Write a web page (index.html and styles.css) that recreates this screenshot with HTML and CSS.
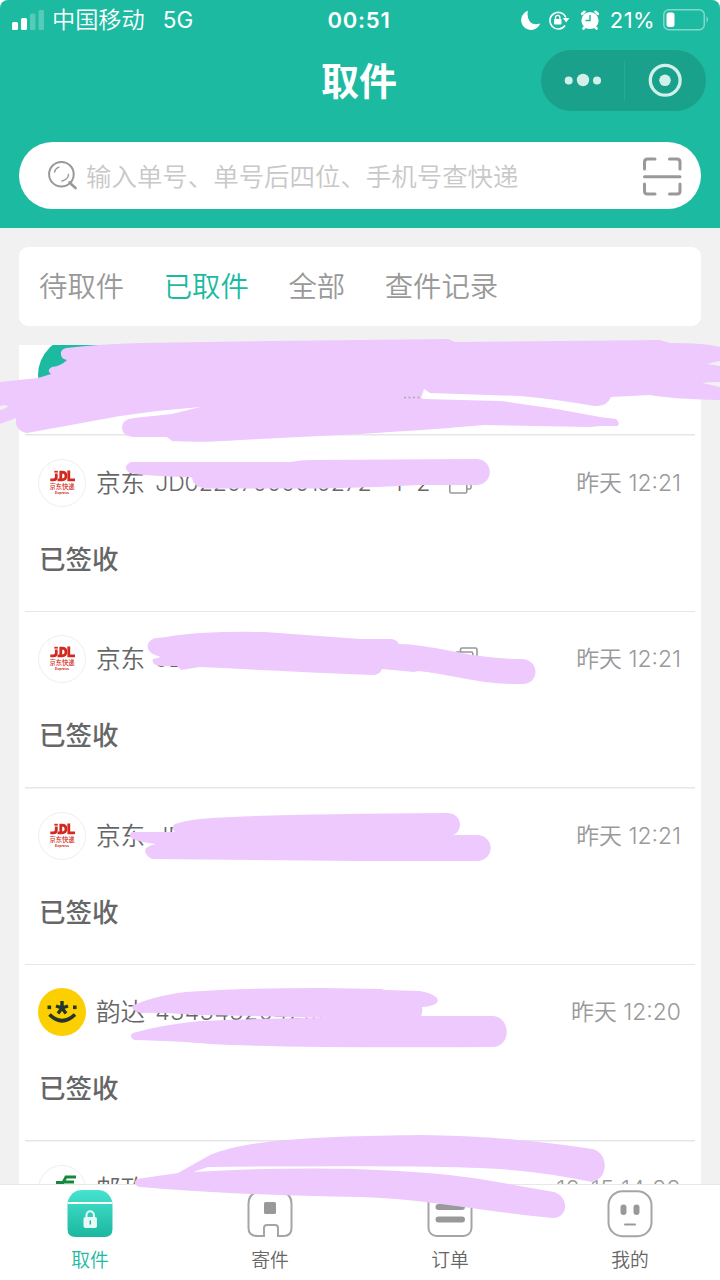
FILE: index.html
```html
<!DOCTYPE html>
<html lang="zh-CN">
<head>
<meta charset="utf-8">
<title>取件</title>
<link rel="stylesheet" href="styles.css">
</head>
<body>
<svg class="defs" width="0" height="0">
  <symbol id="jdl" viewBox="0 0 48 48">
    <g fill="none" stroke="#d22a20" stroke-width="2.800">
      <path d="M12.300 20.800h3.200q2.800 0 2.800-2.800v-3.500"/>
      <path d="M22.800 21.500v-8.300h1.200q4 0 4 3.600 0 4-4 4h-4.500"/>
      <path d="M30.800 11.500v9.300h6.200"/>
    </g>
    <path d="M16.300 11.800h3.500v1.800h-3.500z" fill="#d22a20"/>
  </symbol>
  <symbol id="copy" viewBox="0 0 26 26">
    <g fill="none" stroke="#999" stroke-width="1.600"><rect x="1.800" y="6" width="17" height="17" rx="1.500"/><path d="M6.500 6V3.500Q6.500 2 8 2h13.500Q23 2 23 3.500v14q0 1.500-1.500 1.500H19"/></g>
  </symbol>
</svg>
<main class="screen">
  <header class="header">
    <div class="status">
      <div class="status-left">
        <svg width="34" height="22" viewBox="0 0 34 22" fill="#fff"><rect x="0" y="13" width="6" height="8" rx="1.600"/><rect x="9" y="9" width="6" height="12" rx="1.600"/><g opacity=".25"><rect x="18" y="4.500" width="5.500" height="16.500" rx="1.600"/><rect x="26.500" y="1" width="5.500" height="20" rx="1.600"/></g></svg>
        <span class="carrier">中国移动</span><span class="network">5G</span>
      </div>
      <span class="clock">00:51</span>
      <div class="status-right">
        <svg class="moon" width="20" height="20" viewBox="0 0 20 20" fill="#fff"><path d="M7 .8A9.800 9.800 0 1 0 19.200 13.500Q12 16 8.500 11 5.500 6 7 .8Z"/></svg>
        <svg width="22" height="20" viewBox="0 0 22 20"><path d="M17 15.500A8.300 8.300 0 1 1 17.900 7.500" fill="none" stroke="#fff" stroke-width="1.600"/><path d="M14.800 8h6.600l-3.200 4.500z" fill="#fff"/><rect x="6" y="9" width="7.500" height="5.500" rx=".7" fill="#fff"/><path d="M7.500 9V7.500a2.200 2.200 0 0 1 4.400 0V9" fill="none" stroke="#fff" stroke-width="1.300"/></svg>
        <svg width="20" height="20" viewBox="0 0 20 20"><circle cx="10" cy="10.500" r="8.600" fill="#fff"/><path d="M2.200 3.800 4.500 1.800M17.800 3.800 15.500 1.800M3.500 18.500l2-2M16.500 18.500l-2-2" stroke="#fff" stroke-width="2.600" stroke-linecap="round"/><path d="M10 5v5.500H5.500" fill="none" stroke="#1cbaa1" stroke-width="1.400"/></svg>
        <span class="percent">21%</span>
        <svg width="46" height="22" viewBox="0 0 46 22"><rect x=".8" y=".8" width="40.500" height="20" rx="5" fill="none" stroke="#fff" stroke-opacity=".45" stroke-width="1.500"/><rect x="3.500" y="3.500" width="8" height="14.500" rx="2.500" fill="#fff"/><path d="M43.500 7q3 3.500 0 7z" fill="#fff" opacity=".45"/></svg>
      </div>
    </div>
    <div class="titlebar">
      <h1>取件</h1>
      <div class="capsule">
        <svg width="165" height="61" viewBox="0 0 165 61"><g fill="#d1f0ea"><circle cx="27.700" cy="30.500" r="4"/><circle cx="42" cy="30" r="6.200"/><circle cx="56" cy="30.500" r="4"/><circle cx="124" cy="30.300" r="5.800"/></g><circle cx="124.200" cy="30.300" r="14.900" fill="none" stroke="#d1f0ea" stroke-width="3.300"/><path d="M83.500 11v39" stroke="#2aa994"/></svg>
      </div>
    </div>
    <div class="search">
      <svg width="32" height="32" viewBox="0 0 32 32" fill="none" stroke="#999" stroke-width="2" stroke-linecap="round"><circle cx="14.400" cy="14.200" r="12.300"/><path d="m22.500 22.500 6 5.500" stroke-width="2.600"/><path d="M7.500 12q1-3.800 4.500-4.800M21.500 14.500q-.5 5-6.500 6.500" stroke-width="1.400"/></svg>
      <span class="placeholder">输入单号、单号后四位、手机号查快递</span>
      <svg class="scan" width="40" height="40" viewBox="0 0 40 40" fill="none" stroke="#999" stroke-width="3" stroke-linecap="round"><path d="M2.500 12V5q0-3 3-3H13M27.500 2H35q3 0 3 3v7M38 27v7q0 3-3 3h-7.500M13 37H5.500q-3 0-3-3v-7M2.500 19.800H38"/></svg>
    </div>
  </header>

  <nav class="tabs"><span>待取件</span><span class="on">已取件</span><span>全部</span><span>查件记录</span></nav>

  <section class="list">
    <article class="item first"><div class="avatar green"></div></article>
    <article class="item">
      <div class="row"><div class="avatar jd"><svg width="48" height="48"><use href="#jdl"/></svg><b>京东快递</b><i>Express</i></div><span class="name">京东</span><span class="num n1">JD0220700001 0272</span><span class="suffix">-1-2-</span><svg class="copy" width="26" height="26"><use href="#copy"/></svg><time>昨天 12:21</time></div>
      <p>已签收</p>
    </article>
    <article class="item">
      <div class="row"><div class="avatar jd"><svg width="48" height="48"><use href="#jdl"/></svg><b>京东快递</b><i>Express</i></div><span class="name">京东</span><span class="num n2">JD00</span><svg class="copy" width="26" height="26"><use href="#copy"/></svg><time>昨天 12:21</time></div>
      <p>已签收</p>
    </article>
    <article class="item">
      <div class="row"><div class="avatar jd"><svg width="48" height="48"><use href="#jdl"/></svg><b>京东快递</b><i>Express</i></div><span class="name">京东</span><span class="num n3">JD00</span><time>昨天 12:21</time></div>
      <p>已签收</p>
    </article>
    <article class="item">
      <div class="row"><div class="avatar"><svg width="48" height="48" viewBox="0 0 48 48"><circle cx="24" cy="24" r="24" fill="#fccf00"/><g fill="#23352c"><rect x="9.500" y="17.500" width="3.600" height="3.600"/><rect x="35" y="17.500" width="3.600" height="3.600"/></g><path d="M11.500 26.500q12.500 12.500 25.500 0" fill="none" stroke="#23352c" stroke-width="3.600"/><path d="M24 13v7m-6-2 6 2 6-2m-6 2-4 5.500m4-5.500 4 5.500" fill="none" stroke="#23352c" stroke-width="3.400"/></svg></div><span class="name">韵达</span><span class="num n4">4343432042...</span><time>昨天 12:20</time></div>
      <p>已签收</p>
    </article>
    <article class="item">
      <div class="row"><div class="avatar post"><svg width="48" height="48" viewBox="0 0 48 48"><path d="M18 17.500h7l3-5.500h10M26 17h10" fill="none" stroke="#14883c" stroke-width="2.800"/></svg></div><span class="name">邮政</span><time class="dated">12-15 14:28</time></div>
    </article>
  </section>

  <footer class="tabbar">
    <div class="tab on">
      <svg width="46" height="48" viewBox="0 0 46 48"><defs><linearGradient id="box" x2="0" y2="1"><stop stop-color="#45e3d0"/><stop offset="1" stop-color="#1cb79f"/></linearGradient></defs><path d="M.5 12.500Q4 0 15 0h16q11 0 14.500 12.500V39q0 8-8 8H8.500q-8 0-8-8Z" fill="url(#box)"/><path d="M.5 13h45" stroke="#fff" stroke-width="2"/><rect x="16.500" y="27" width="13.500" height="11" rx="2" fill="#e7faf7"/><path d="M19.500 28v-3a3.700 3.700 0 0 1 7.400 0v3" fill="none" stroke="#e7faf7" stroke-width="2"/><path d="M23.300 30.500v4" stroke="#1cb79f" stroke-width="1.500"/></svg>
      <span>取件</span>
    </div>
    <div class="tab">
      <svg width="46" height="48" viewBox="0 0 46 48"><path d="M12 1.500h22q10.500 2 10.500 12V38q0 8-8 8H31V38q0-3-3-3H20q-3 0-3 3v8h-6.500q-9 0-9-8V13.500q0-10 10.500-12Z" fill="none" stroke="#a5a5a5" stroke-width="2"/><rect x="17" y="12" width="12" height="12" rx="1.500" fill="#999"/></svg>
      <span>寄件</span>
    </div>
    <div class="tab">
      <svg width="46" height="48" viewBox="0 0 46 48"><rect x="1.500" y="1.500" width="43" height="44.500" rx="8" fill="none" stroke="#a5a5a5" stroke-width="2"/><path d="M11.500 17h23.500M11.500 29.500h23.500" stroke="#999" stroke-width="6" stroke-linecap="round"/></svg>
      <span>订单</span>
    </div>
    <div class="tab">
      <svg width="46" height="48" viewBox="0 0 46 48"><rect x="1.500" y="1.200" width="43" height="45" rx="14" fill="none" stroke="#a5a5a5" stroke-width="2"/><rect x="13.500" y="14.500" width="6" height="10.500" rx="3" fill="#999"/><rect x="26.500" y="14.500" width="6" height="10.500" rx="3" fill="#999"/><path d="M18 34.500h10" stroke="#999" stroke-width="2" stroke-linecap="round"/></svg>
      <span>我的</span>
    </div>
  </footer>

  <svg class="marker" width="720" height="1280" viewBox="0 0 720 1280">
    <path d="M66 348Q100 344 140 343L270 341 448 339 455 342 660 340 670 343Q705 343 720 347V361Q714 362 707 364 714 365 720 366V382Q708 382 702 383 712 385 720 387V400Q670 399 650 395L611 397Q607 407 594 406 555 399 520 396L430 393 424 389 421 398 424 399 500 401Q550 407 600 417L616 419Q620 422 618 426L600 426 590 427 484 425Q440 429 360 434L240 440Q200 443 172 441L167 437H134Q122 436 122 427 122 419 134 418L172 414 200 407Q160 410 120 416L27 433Q17 431 16 424V418L0 424V410Q5 409 9 406L4 405 0 406V382L38 378 51 374Q46 370 52 367 61 366 67 360 60 359 61 352Q62 349 66 348Z"/>
    <path d="M404 397.500h18" stroke="#aaa" stroke-width="1.500" stroke-dasharray="2 2.500"/>
    <path d="M131 462H290Q300 460 312 460L477 459C494 460 494 484 477 485L420 485Q370 488 320 488.500H205Q193 487 192 478L190 477Q145 476 130 473 121 467 131 462Z"/>
    <path d="M157 638 166 637Q200 631 265 632L360 639H392Q397 640 399 644C438 645 470 659 522 659C540 660 540 684 522 684C480 685 450 674 418 671L414 672 382 669Q380 675 372 675 280 671 200 667L181 670 177 666H160Q151 665 153 659L161 657 155 655C144 651 146 639 157 638Z"/>
    <path d="M175 824Q190 819 213 818 275 814 448 813C463 814 463 832 453 835H478C495 837 495 859 478 861L360 861 152 859Q143 854 146 848 150 845 156 844 140 842 133 839 127 835 132 832L175 832Q170 827 175 824Z"/>
    <path d="M132 1006Q150 997 185 992 245 988 320 988L382 989 384 990 420 991Q432 993 437 998C440 1003 434 1006 422 1007Q423 1012 421 1016H494C511 1019 511 1045 494 1047Q280 1048 210 1044 180 1041 134 1040 128 1036 133 1033 160 1025 200 1021 260 1018 330 1018 260 1016 200 1015 155 1012 141 1013 132 1011 132 1006Z"/>
    <path d="M178 1173 210 1155C250 1137 350 1136 420 1135Q510 1136 592 1149C609 1152 609 1179 592 1182Q535 1170 480 1168 420 1165 208 1167L193 1172C290 1166 400 1167 480 1179L554 1192C570 1197 568 1218 553 1218 485 1212 420 1198 360 1197Q230 1195 140 1187 131 1184 137 1179Z"/>
  </svg>
</main>
</body>
</html>
```
FILE: styles.css
```css
* { box-sizing: border-box; }
body { margin: 0; background: #fff; font-family: Inter, "Noto Sans CJK SC", sans-serif; }
h1, p { margin: 0; }
svg { display: block; flex: none; }
.defs { position: absolute; }
.screen { position: relative; width: 720px; height: 1280px; overflow: hidden; display: flex; flex-direction: column; background: #f1f1f1; border-radius: 8px 8px 0 0; }

.header { height: 228px; background: #1cbaa1; color: #fff; padding: 0 19px; flex: none; }
.status { height: 40px; margin: 0 -7px; display: grid; grid-template-columns: 1fr auto 1fr; align-items: center; font-size: 22px; line-height: 40px; }
.status-left, .status-right { display: flex; align-items: center; }
.status-left svg { margin-right: 6px; }
.carrier { font-size: 23.2px; font-weight: 350; }
.network { margin-left: 18px; font-size: 22.5px; }
.clock { font-weight: 600; letter-spacing: .8px; margin-left: -2px; }
.status-right { justify-content: flex-end; gap: 10px; margin-right: -1px; }
.moon { margin-right: -3px; }
.percent { letter-spacing: .4px; margin-right: -2px; }
.titlebar { height: 102px; display: grid; grid-template-columns: 1fr auto 1fr; padding-top: 10px; margin-right: -5px; }
.titlebar h1 { grid-column: 2; font-size: 38px; font-weight: 600; line-height: 62px; margin-left: -7px; }
.capsule { grid-column: 3; justify-self: end; width: 165px; height: 61px; border-radius: 31px; background: #1aa18b; }
.search { height: 67px; width: 682px; border-radius: 34px; background: #fff; display: flex; align-items: center; padding: 0 19px 0 28px; }
.placeholder { flex: 1; margin: 2px 0 0 7px; color: #c8c8c8; font-size: 25.45px; font-weight: 350; line-height: 60px; }
.scan { margin-top: 2px; }

.tabs { height: 79px; margin: 19px 19px 0; padding: 0 19px 0 20px; border-radius: 9px; background: #fff; display: flex; gap: 39.5px; align-items: center; color: #999; font-size: 28.4px; line-height: 70px; font-weight: 350; flex: none; }
.tabs .on { color: #1cbaa1; }

.list { flex: 1; min-height: 0; margin: 19px 19px 0; overflow: hidden; background: #fff; }
.item { height: 176.5px; padding: 23px 20px 0 19px; background: linear-gradient(#e6e6e6, #e6e6e6) 6px 100% / 670px 1.5px no-repeat; }
.first { height: 90.5px; padding-top: 0; overflow: hidden; }
.row { height: 48px; display: flex; align-items: center; color: #666; }
.avatar { width: 48px; height: 48px; border-radius: 50%; position: relative; flex: none; }
.avatar.green { width: 76px; height: 76px; background: #1cbaa1; margin-top: -8px; }
.jd, .post { border: 1px solid #eee; }
.jd svg, .post svg { margin: -1px; }
.jd b, .jd i { position: absolute; left: 0; right: 0; text-align: center; color: #d22a20; font-style: normal; line-height: 8px; white-space: nowrap; }
.jd b { top: 23px; font-size: 6.3px; font-weight: 500; }
.jd i { top: 29px; font-size: 3.6px; font-weight: 600; }
.name { margin-left: 10px; font-size: 24.6px; line-height: 48px; font-weight: 350; }
.num { margin-left: 10px; font-size: 23px; font-weight: 350; white-space: nowrap; }
.n1 { width: 226px; word-spacing: -8px; letter-spacing: -.1px; }
.suffix { width: 65px; font-size: 23px; font-weight: 350; letter-spacing: 2px; white-space: nowrap; }
.n2 { width: 297px; }
.n4 { letter-spacing: .6px; }
.copy { margin-left: 2px; }
time { margin-left: auto; color: #999; font-size: 22.9px; font-weight: 350; line-height: 48px; white-space: nowrap; }
.dated { letter-spacing: .4px; }
.item p { margin-top: 31px; padding-left: 1px; color: #666; font-size: 26.5px; font-weight: 500; line-height: 43px; }

.tabbar { height: 96px; flex: none; background: #fff; border-top: 1px solid #e8e8e8; display: grid; grid-template-columns: repeat(4, 1fr); }
.tab { display: flex; flex-direction: column; align-items: center; padding-top: 5px; color: #666; font-size: 18.8px; line-height: 46px; font-weight: 350; }
.tab.on { color: #1cbaa1; }
.marker { position: absolute; inset: 0; fill: #eec9fd; pointer-events: none; }
```
